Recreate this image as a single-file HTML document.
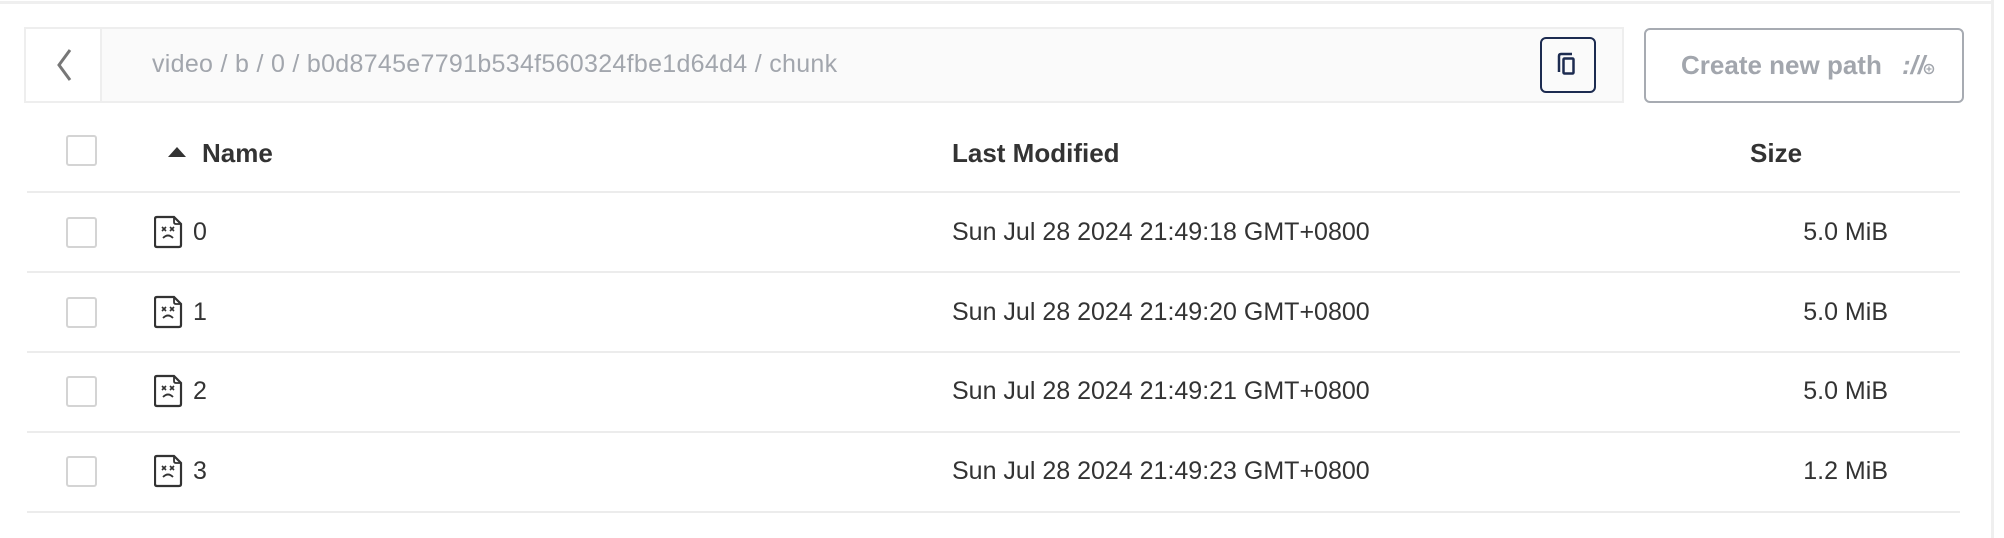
<!DOCTYPE html>
<html><head><meta charset="utf-8"><style>
*{box-sizing:border-box;margin:0;padding:0}
body{width:2004px;height:538px;background:#fff;font-family:"Liberation Sans",sans-serif;position:relative;overflow:hidden;color:#333}
.abs{position:absolute}
.cb{position:absolute;left:66px;width:31px;height:31px;border:2px solid #d4d4d4;border-radius:3px;background:#fff}
.sep{position:absolute;left:27px;width:1933px;height:2px;background:#ececec}
.row{position:absolute;font-size:25px;color:#333}
</style></head><body>
<div class="abs" style="left:0;top:1px;width:1992px;height:3px;background:#efefef"></div>
<div class="abs" style="left:1991px;top:0;width:3px;height:538px;background:#efefef"></div>

<div class="abs" style="left:24px;top:27px;width:1600px;height:76px;border:2px solid #eeeeee;background:#fafafa"></div>
<div class="abs" style="left:26px;top:29px;height:72px;background:#fff;border-right:2px solid #eee;width:76px"></div>
<svg class="abs" style="left:52px;top:46px" width="24" height="38" viewBox="0 0 24 38"><path d="M18 4 L7 19 L18 34" fill="none" stroke="#777" stroke-width="3"/></svg>
<div class="abs" style="left:152px;top:50px;font-size:25px;color:#a2a6ad;white-space:nowrap;letter-spacing:0.3px">video / b / 0 / b0d8745e7791b534f560324fbe1d64d4 / chunk</div>
<div class="abs" style="left:1540px;top:37px;width:56px;height:56px;border:2px solid #1c2b50;border-radius:6px"></div>
<svg class="abs" style="left:1556px;top:52px" width="24" height="26" viewBox="0 0 24 26"><path d="M3 20 V4 Q3 2 5 2 H16" fill="none" stroke="#1c2b50" stroke-width="2.5"/><rect x="7.5" y="6.5" width="10" height="15" rx="1" fill="none" stroke="#1c2b50" stroke-width="2.5"/></svg>
<div class="abs" style="left:1644px;top:28px;width:320px;height:75px;border:2px solid #a7abb2;border-radius:6px"></div>
<div class="abs" style="left:1681px;top:50px;font-size:26px;font-weight:bold;color:#a2a6ad;white-space:nowrap">Create new path</div>
<div class="abs" style="left:1902px;top:50px;font-size:26px;font-weight:bold;color:#a2a6ad;font-style:italic">://</div>
<svg class="abs" style="left:1923px;top:63px" width="12" height="12"><circle cx="6" cy="6" r="4.5" fill="#fff" stroke="#a2a6ad" stroke-width="1.5"/><path d="M6 3.5V8.5M3.5 6H8.5" stroke="#a2a6ad" stroke-width="1.3"/></svg>

<div class="cb" style="top:135px"></div>
<svg class="abs" style="left:167px;top:146px" width="20" height="12"><path d="M1 11 L10 1 L19 11Z" fill="#333"/></svg>
<div class="abs" style="left:202px;top:138px;font-size:26px;font-weight:bold;color:#333">Name</div>
<div class="abs" style="left:952px;top:138px;font-size:26px;font-weight:bold;color:#333">Last Modified</div>
<div class="abs" style="left:1750px;top:138px;font-size:26px;font-weight:bold;color:#333">Size</div>
<div class="sep" style="top:191px"></div>

<div class="cb" style="top:217px"></div>
<div class="cb" style="top:297px"></div>
<div class="cb" style="top:376px"></div>
<div class="cb" style="top:456px"></div>
<div class="sep" style="top:271px"></div>
<div class="sep" style="top:351px"></div>
<div class="sep" style="top:431px"></div>
<div class="sep" style="top:511px"></div>

<svg width="0" height="0" style="position:absolute"><defs><g id="fi"><path d="M3 2 H20 L27 9 V30 Q27 32 25 32 H3 Q1 32 1 30 V4 Q1 2 3 2Z" fill="none" stroke="#333" stroke-width="2.2"/><path d="M20 2 V7 Q20 9 22 9 H27" fill="none" stroke="#333" stroke-width="1.8"/><path d="M8 12 L12 16 M12 12 L8 16 M16 12 L20 16 M20 12 L16 16" stroke="#333" stroke-width="1.6"/><path d="M9 23 Q14 18 19 23" fill="none" stroke="#333" stroke-width="1.8"/></g></defs></svg>
<svg class="abs" style="left:154px;top:215px" width="30" height="35"><use href="#fi"/></svg>
<svg class="abs" style="left:154px;top:295px" width="30" height="35"><use href="#fi"/></svg>
<svg class="abs" style="left:154px;top:374px" width="30" height="35"><use href="#fi"/></svg>
<svg class="abs" style="left:154px;top:454px" width="30" height="35"><use href="#fi"/></svg>

<div class="row" style="left:193px;top:218px">0</div>
<div class="row" style="left:193px;top:298px">1</div>
<div class="row" style="left:193px;top:377px">2</div>
<div class="row" style="left:193px;top:457px">3</div>
<div class="row" style="left:952px;top:218px">Sun Jul 28 2024 21:49:18 GMT+0800</div>
<div class="row" style="left:952px;top:298px">Sun Jul 28 2024 21:49:20 GMT+0800</div>
<div class="row" style="left:952px;top:377px">Sun Jul 28 2024 21:49:21 GMT+0800</div>
<div class="row" style="left:952px;top:457px">Sun Jul 28 2024 21:49:23 GMT+0800</div>
<div class="row" style="right:116px;top:218px">5.0 MiB</div>
<div class="row" style="right:116px;top:298px">5.0 MiB</div>
<div class="row" style="right:116px;top:377px">5.0 MiB</div>
<div class="row" style="right:116px;top:457px">1.2 MiB</div>
</body></html>
